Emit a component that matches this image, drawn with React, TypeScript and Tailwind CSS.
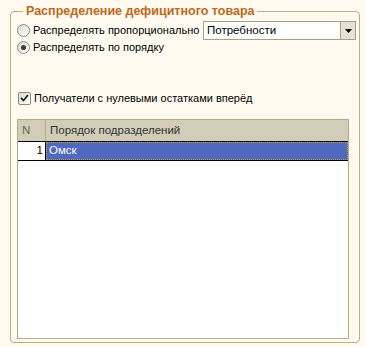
function Radio({ checked }: { checked?: boolean }) {
  return (
    <span className="flex h-[13px] w-[13px] shrink-0 items-center justify-center rounded-full border border-[#8b8b84] bg-gradient-to-br from-[#dcdad2] to-white">
      {checked && <span className="h-[5px] w-[5px] rounded-full bg-[#3a3a3a]" />}
    </span>
  );
}

export default function App() {
  return (
    <div
      className="h-[347px] w-[365px] overflow-hidden bg-[#fffaf0] pl-[10px] pt-[3px] text-[11px] text-black"
      style={{ fontFamily: '"Liberation Sans", Arial, sans-serif' }}
    >
      <fieldset className="h-[340px] w-[350px] rounded-[4px] border border-[#b9ae82] px-[6px]">
        <legend className="ml-[6px] px-[3px] text-[12.5px] font-bold leading-[16px] text-[#c0681c]">
          Распределение дефицитного товара
        </legend>

        {/* Radio options */}
        <div className="mt-[2px] flex items-center whitespace-nowrap">
          <label className="flex items-center gap-[3px]">
            <Radio />
            <span>Распределять пропорционально</span>
          </label>
          <div className="ml-auto mr-[-3px] flex h-[19px] w-[153px] items-center border border-[#a59f89] bg-white">
            <span className="flex-1 pl-[3px] text-[11.5px]">Потребности</span>
            <span className="flex h-full w-[15px] items-center justify-center border-l border-[#a59f89] bg-[#e6e1d4]">
              <svg width="7" height="4" viewBox="0 0 7 4">
                <path d="M0 0h7L3.5 4z" fill="#000" />
              </svg>
            </span>
          </div>
        </div>
        <label className="flex h-[14px] items-center gap-[3px] whitespace-nowrap">
          <Radio checked />
          <span>Распределять по порядку</span>
        </label>

        {/* Checkbox */}
        <label className="mt-[37px] flex h-[14px] items-center gap-[3px] whitespace-nowrap pl-[1px]">
          <span className="flex h-[13px] w-[13px] items-center justify-center rounded-[2px] border border-[#8b8b84] bg-gradient-to-br from-[#dcdad2] to-white">
            <svg width="9" height="8" viewBox="0 0 9 8">
              <path d="M1 4l2.5 2.5L8 1" stroke="#222" strokeWidth="1.8" fill="none" />
            </svg>
          </span>
          <span>Получатели с нулевыми остатками вперёд</span>
        </label>

        {/* Table */}
        <div className="mt-[14px] flex h-[220px] w-[332px] flex-col border border-[#b3aa84] bg-white text-[11.5px]">
          <div className="flex h-[21px] shrink-0 bg-[#d1cdb9]">
            <div className="flex w-[28px] items-center border-r border-[#b3aa84] pl-[4px] text-[#6b6350]">N</div>
            <div className="flex flex-1 items-center pl-[4px] text-[#333]">Порядок подразделений</div>
          </div>
          <div className="flex h-[20px] shrink-0 border-y border-black">
            <div className="flex w-[28px] items-center justify-end border-r border-black pr-[2px]">1</div>
            <div className="flex flex-1 items-center bg-[#5068c0] pl-[3px] text-white outline-1 outline-dotted outline-offset-[-1px] outline-[#c8a040]">
              Омск
            </div>
          </div>
        </div>
      </fieldset>
    </div>
  );
}
